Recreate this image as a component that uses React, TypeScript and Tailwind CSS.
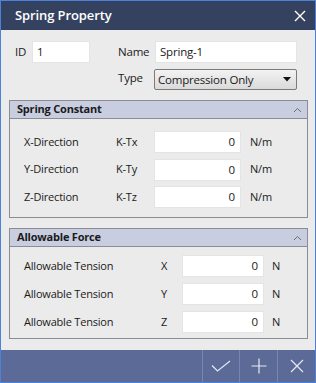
import React from 'react';

const font = { fontFamily: '"Open Sans", "Noto Sans", sans-serif' };

const Field = ({ value, width, align = 'left' }: { value: string; width: string; align?: 'left' | 'right' }) => (
  <div className={`${width} h-[22px] bg-white border border-[#e4e4e4] flex items-center text-[11.5px] text-[#1a1a1a] ${align === 'right' ? 'justify-end pr-[5px]' : 'pl-[4px]'}`}>
    {value}
  </div>
);

const Chevron = () => (
  <svg width="9" height="6" viewBox="0 0 9 6" className="mr-[5px]">
    <path d="M1 5 L4.5 1.5 L8 5" fill="none" stroke="#6b6f7a" strokeWidth="1" />
  </svg>
);

const Section = ({ title, children }: { title: string; children: React.ReactNode }) => (
  <div className="ml-[8px] mr-[7px] border border-[#8a8d94] bg-[#ebebeb]">
    <div className="h-[18px] bg-[#c8cde0] border-b border-[#8a8d94] flex items-center justify-between pl-[7px]">
      <span className="text-[11px] font-bold tracking-[-0.2px] text-[#1b1b1b]">{title}</span>
      <Chevron />
    </div>
    {children}
  </div>
);

const springRows = [
  { label: 'X-Direction', key: 'K-Tx' },
  { label: 'Y-Direction', key: 'K-Ty' },
  { label: 'Z-Direction', key: 'K-Tz' },
];

const forceRows = ['X', 'Y', 'Z'];

export default function App() {
  return (
    <div className="w-[316px] h-[383px] border border-[#4a82dc] bg-[#ebebeb] flex flex-col text-[11px] tracking-[-0.2px]" style={font}>
      <header className="h-[29px] bg-[#344260] flex items-center justify-between pl-[14px] pr-[9px]">
        <span className="text-white text-[13px] font-semibold tracking-[-0.1px]">Spring Property</span>
        <svg width="12" height="12" viewBox="0 0 12 12">
          <path d="M1 1 L11 11 M11 1 L1 11" stroke="#ffffff" strokeWidth="1.4" />
        </svg>
      </header>

      <div className="flex items-center pl-[14px] pt-[11px] text-[#1a1a1a]">
        <span className="w-[17px] text-[11.5px]">ID</span>
        <Field value="1" width="w-[58px]" />
        <span className="ml-[28px] w-[37px] text-[11.5px]">Name</span>
        <Field value="Spring-1" width="w-[142px]" />
      </div>
      <div className="flex items-center pl-[117px] mt-[6px] text-[#1a1a1a]">
        <span className="w-[36px] -mt-[3px] text-[11.5px]">Type</span>
        <div className="w-[143px] h-[21px] rounded-[2px] border border-[#7b7b7b] bg-gradient-to-b from-[#f3f3f3] to-[#dadada] flex items-center justify-between pl-[3px] pr-[5px]">
          <span className="text-[11.5px]">Compression Only</span>
          <svg width="8" height="5" viewBox="0 0 8 5">
            <path d="M0 0 H8 L4 4.5 Z" fill="#111111" />
          </svg>
        </div>
      </div>

      <div className="mt-[10px]">
        <Section title="Spring Constant">
          <div className="flex flex-col gap-[5.5px] pt-[12px] pb-[9px] pl-[14px] text-[#1a1a1a]">
            {springRows.map(r => (
              <div key={r.key} className="flex items-center h-[22px]">
                <span className="w-[92px]">{r.label}</span>
                <span className="w-[38px]">{r.key}</span>
                <Field value="0" width="w-[87px]" align="right" />
                <span className="ml-[9px]">N/m</span>
              </div>
            ))}
          </div>
        </Section>
      </div>

      <div className="mt-[10px]">
        <Section title="Allowable Force">
          <div className="flex flex-col gap-[6px] pt-[8px] pb-[5px] pl-[14px] text-[#1a1a1a]">
            {forceRows.map(a => (
              <div key={a} className="flex items-center h-[22px]">
                <span className="w-[137px]">Allowable Tension</span>
                <span className="w-[21px]">{a}</span>
                <Field value="0" width="w-[82px]" align="right" />
                <span className="ml-[8px]">N</span>
              </div>
            ))}
          </div>
        </Section>
      </div>

      <footer className="mt-auto h-[32px] bg-[#5b6a97] flex justify-end">
        <button className="w-[37px] h-full flex items-center justify-center border-l border-[#7885ad]">
          <svg width="20" height="12" viewBox="0 0 20 12">
            <path d="M1 5.5 L6.5 11 L19 1" fill="none" stroke="#e6e9f2" strokeWidth="1.2" />
          </svg>
        </button>
        <button className="w-[38px] h-full flex items-center justify-center border-l border-[#7885ad]">
          <svg width="16" height="16" viewBox="0 0 16 16">
            <path d="M8 0.5 V15.5 M0.5 8 H15.5" stroke="#e6e9f2" strokeWidth="1.2" />
          </svg>
        </button>
        <button className="w-[38px] h-full flex items-center justify-center border-l border-[#7885ad]">
          <svg width="14" height="14" viewBox="0 0 14 14">
            <path d="M1 1 L13 13 M13 1 L1 13" stroke="#e6e9f2" strokeWidth="1.2" />
          </svg>
        </button>
      </footer>
    </div>
  );
}
